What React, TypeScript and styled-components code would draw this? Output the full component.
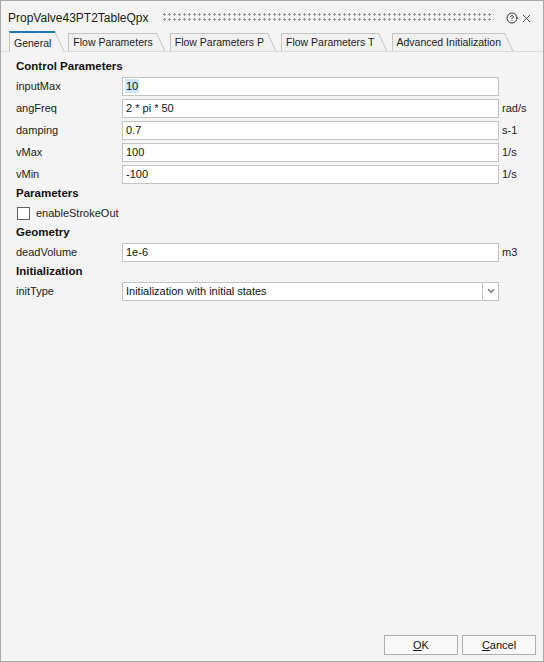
import React from "react";
import styled, { createGlobalStyle } from "styled-components";
import { CircleHelp, X } from "lucide-react";

const GlobalStyle = createGlobalStyle`
  html, body {
    margin: 0;
    padding: 0;
    background: #f4f4f4;
  }
  * {
    box-sizing: border-box;
  }
`;

const Window = styled.div`
  width: 544px;
  height: 662px;
  border: 1px solid #a9a9a9;
  background: #f4f4f4;
  display: flex;
  flex-direction: column;
  font-family: "Liberation Sans", Arial, sans-serif;
  font-size: 11px;
  color: #1b1b1b;
`;

const TitleBar = styled.div`
  height: 30px;
  padding: 4px 9px 0 7px;
  display: flex;
  align-items: center;
`;

const Title = styled.div`
  font-size: 12px;
  color: #1a1a1a;
`;

const Grip = styled.div`
  flex: 1;
  height: 10px;
  margin: 0 10px 0 14px;
  background: radial-gradient(circle at 1.5px 1.5px, #969696 1px, transparent 1.4px) 0 0 / 5px 5px;
`;

const TitleButton = styled.span`
  display: flex;
  align-items: center;
  justify-content: center;
  width: 15px;
  height: 15px;
  color: #333;
`;

const TabStrip = styled.div`
  height: 21px;
  padding-left: 8px;
  display: flex;
  align-items: flex-end;
  border-bottom: 1px solid #dadada;
`;

const Tab = styled.div<{ $active?: boolean }>`
  position: relative;
  isolation: isolate;
  height: ${(p) => (p.$active ? 21 : 18)}px;
  margin-bottom: ${(p) => (p.$active ? -1 : 0)}px;
  margin-right: 4px;
  padding: ${(p) => (p.$active ? 2 : 0)}px 13px 0 5px;
  display: flex;
  align-items: center;
  white-space: nowrap;
  font-size: 10.5px;
  color: #1b1b1b;

  &::before {
    content: "";
    position: absolute;
    z-index: -1;
    left: 0;
    top: 0;
    bottom: 0;
    right: 9px;
    background: ${(p) => (p.$active ? "#f4f4f4" : "#f1f1f1")};
    border-left: 1px solid #c4c4c4;
    border-top: ${(p) => (p.$active ? "2px solid #1c78b4" : "1px solid #c4c4c4")};
  }

  &::after {
    content: "";
    position: absolute;
    z-index: -1;
    top: 0;
    bottom: 0;
    right: 9px;
    width: 16px;
    background: ${(p) => (p.$active ? "#f4f4f4" : "#f1f1f1")};
    border-right: 1px solid #c4c4c4;
    border-top: ${(p) => (p.$active ? "2px solid #1c78b4" : "1px solid #c4c4c4")};
    transform: skewX(25deg);
    transform-origin: top left;
  }
`;

const Panel = styled.div`
  flex: 1;
  padding: 6px 0 0 15px;
  display: flex;
  flex-direction: column;
`;

const Heading = styled.div`
  height: 17px;
  line-height: 17px;
  font-weight: bold;
  font-size: 11.5px;
  color: #111;
`;

const Row = styled.div`
  height: 22px;
  display: grid;
  grid-template-columns: 103px 377px auto;
  column-gap: 3px;
  align-items: center;
`;

const Label = styled.span`
  white-space: nowrap;
`;

const Field = styled.div`
  height: 19px;
  border: 1px solid #c3c3c3;
  background: #fff;
  padding: 0 3px;
  display: flex;
  align-items: center;
  color: #111;
  white-space: nowrap;
`;

const Selected = styled.span`
  background: #cce8ff;
  padding: 1px 1px;
  margin-left: -1px;
`;

const Unit = styled.span`
  color: #222;
`;

const SelectBox = styled(Field)`
  padding-right: 0;
  justify-content: space-between;
`;

const SelectArrow = styled.span`
  width: 16px;
  height: 17px;
  border-left: 1px solid #c3c3c3;
  display: flex;
  align-items: center;
  justify-content: center;
`;

const CheckRow = styled.label`
  height: 22px;
  display: flex;
  align-items: center;
  gap: 6px;
  padding-left: 1px;
`;

const CheckBox = styled.span`
  width: 13px;
  height: 13px;
  border: 1px solid #5f5f5f;
  background: #fff;
`;

const Footer = styled.div`
  display: flex;
  justify-content: flex-end;
  gap: 4px;
  padding: 0 7px 6px 0;
`;

const Button = styled.button`
  width: 74px;
  height: 20px;
  border: 1px solid #adadad;
  background: #f8f8f8;
  font-family: "Liberation Sans", Arial, sans-serif;
  font-size: 11px;
  color: #111;
  padding: 0;

  u {
    text-decoration: underline;
  }
`;

const tabs = [
  "General",
  "Flow Parameters",
  "Flow Parameters P",
  "Flow Parameters T",
  "Advanced Initialization",
];

const controlParams = [
  { name: "angFreq", value: "2 * pi * 50", unit: "rad/s" },
  { name: "damping", value: "0.7", unit: "s-1" },
  { name: "vMax", value: "100", unit: "1/s" },
  { name: "vMin", value: "-100", unit: "1/s" },
];

export default function App() {
  return (
    <>
      <GlobalStyle />
      <Window>
        <TitleBar>
          <Title>PropValve43PT2TableQpx</Title>
          <Grip />
          <TitleButton>
            <CircleHelp size={12} strokeWidth={2} />
          </TitleButton>
          <TitleButton>
            <X size={13} strokeWidth={1.6} />
          </TitleButton>
        </TitleBar>

        <TabStrip>
          {tabs.map((t, i) => (
            <Tab key={t} $active={i === 0}>
              {t}
            </Tab>
          ))}
        </TabStrip>

        <Panel>
          <Heading>Control Parameters</Heading>
          <Row>
            <Label>inputMax</Label>
            <Field>
              <Selected>10</Selected>
            </Field>
          </Row>
          {controlParams.map((p) => (
            <Row key={p.name}>
              <Label>{p.name}</Label>
              <Field>{p.value}</Field>
              <Unit>{p.unit}</Unit>
            </Row>
          ))}

          <Heading>Parameters</Heading>
          <CheckRow>
            <CheckBox />
            <Label>enableStrokeOut</Label>
          </CheckRow>

          <Heading>Geometry</Heading>
          <Row>
            <Label>deadVolume</Label>
            <Field>1e-6</Field>
            <Unit>m3</Unit>
          </Row>

          <Heading>Initialization</Heading>
          <Row>
            <Label>initType</Label>
            <SelectBox>
              <span>Initialization with initial states</span>
              <SelectArrow>
                <svg width="8" height="6" viewBox="0 0 8 6">
                  <path d="M1 1.2 L4 4.2 L7 1.2" fill="none" stroke="#7a7a7a" strokeWidth="1.6" />
                </svg>
              </SelectArrow>
            </SelectBox>
          </Row>
        </Panel>

        <Footer>
          <Button>
            <u>O</u>K
          </Button>
          <Button>
            <u>C</u>ancel
          </Button>
        </Footer>
      </Window>
    </>
  );
}
